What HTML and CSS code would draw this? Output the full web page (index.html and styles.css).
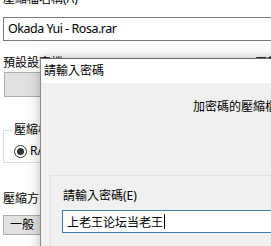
FILE: index.html
```html
<!DOCTYPE html>
<html>
<head>
<meta charset="utf-8">
<link rel="stylesheet" href="styles.css">
</head>
<body>
<div class="main">
  <div class="label first">壓縮檔名稱(A)</div>
  <div class="field">Okada Yui - Rosa.rar</div>
  <div class="row">
    <span class="label">預設設定檔</span>
    <span class="label">更新...</span>
  </div>
  <div class="btn wide"></div>
  <fieldset class="group">
    <legend>壓縮檔格式</legend>
    <div class="radio"><span class="dot"></span><span>RAR</span></div>
  </fieldset>
  <div class="label method">壓縮方式</div>
  <div class="btn combo">一般</div>
</div>

<div class="dialog">
  <div class="titlebar">請輸入密碼</div>
  <div class="dbody">
    <div class="note">加密碼的壓縮檔案</div>
    <div class="panel">
      <div class="plabel">請輸入密碼(E)</div>
      <div class="pfield"><span>上老王论坛当老王</span><span class="caret"></span></div>
    </div>
  </div>
</div>
</body>
</html>
```

FILE: styles.css
```css
html, body {
  margin: 0;
  padding: 0;
  background: #ffffff;
  width: 271px;
  height: 246px;
  overflow: hidden;
  font-family: "Noto Sans", "Noto Sans CJK TC", sans-serif;
  font-size: 12px;
  color: #000;
}

.main {
  position: relative;
  padding-left: 3px;
  display: flex;
  flex-direction: column;
  align-items: flex-start;
}

.label {
  line-height: 16px;
  white-space: nowrap;
}

.first {
  margin-top: -9px;
}

.field {
  box-sizing: border-box;
  margin-top: 10px;
  width: 300px;
  height: 24px;
  border: 1px solid #7a7a7a;
  padding-left: 4px;
  line-height: 22px;
  font-size: 12.5px;
  letter-spacing: -0.5px;
}

.row {
  margin-top: 14px;
  width: 268px;
  display: flex;
  justify-content: space-between;
}

.row .label:last-child {
  margin-right: -18px;
}

.btn {
  box-sizing: border-box;
  background: #e1e1e1;
  border: 1px solid #adadad;
}

.wide {
  margin-top: 1px;
  margin-left: 1px;
  width: 120px;
  height: 25px;
}

.group {
  margin: 26px 0 0 0;
  padding: 6px 0 0 10px;
  width: 200px;
  height: 40px;
  box-sizing: border-box;
  border: 1px solid #dcdcdc;
  border-right: none;
}

.group legend {
  padding: 0 2px;
  margin-left: -2px;
  line-height: 14px;
}

.radio {
  display: flex;
  align-items: center;
  gap: 3px;
  line-height: 16px;
}

.dot {
  width: 11px;
  height: 11px;
  border: 1px solid #333;
  border-radius: 50%;
  display: flex;
  align-items: center;
  justify-content: center;
}

.dot::after {
  content: "";
  width: 7px;
  height: 7px;
  border-radius: 50%;
  background: #333;
}

.method {
  margin-top: 28px;
}

.combo {
  margin-top: 8px;
  width: 60px;
  height: 20px;
  line-height: 18px;
  padding-left: 6px;
}

.dialog {
  position: absolute;
  left: 40px;
  top: 58px;
  width: 300px;
  height: 260px;
  border: 1px solid #6c6c6c;
  border-left-color: #8a8a8a;
  background: #f0f0f0;
  box-shadow: 0 0 12px rgba(0, 0, 0, 0.28);
}

.titlebar {
  background: #ffffff;
  height: 24px;
  line-height: 24px;
  padding-left: 3px;
  font-size: 12px;
}

.dbody {
  position: relative;
  padding-top: 16px;
}

.note {
  padding-left: 152px;
  line-height: 16px;
  white-space: nowrap;
}

.panel {
  margin: 60px 0 0 9px;
  border-top: 1px solid #e3e3e3;
  border-left: 1px solid #e3e3e3;
  padding: 12px 0 0 12px;
  height: 100px;
}

.plabel {
  line-height: 16px;
}

.pfield {
  margin-top: 6px;
  margin-left: -1px;
  box-sizing: border-box;
  width: 260px;
  height: 23px;
  background: #fff;
  border: 1px solid #3f7fb4;
  padding-left: 4px;
  display: flex;
  align-items: center;
  font-size: 12px;
}

.caret {
  width: 1px;
  height: 15px;
  background: #000;
  margin-left: 1px;
}
```
